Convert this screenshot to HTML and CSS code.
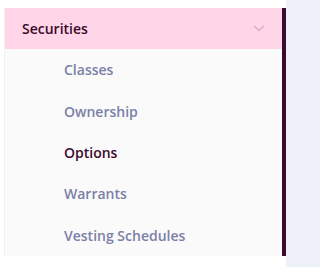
FILE: index.html
```html
<!DOCTYPE html>
<html>
<head>
<meta charset="utf-8">
<link rel="stylesheet" href="styles.css">
</head>
<body>
<div class="layout">
  <nav class="menu">
    <div class="group-head">
      <span class="group-title">Securities</span>
      <svg class="chevron" width="12" height="7" viewBox="0 0 12 7"><path d="M1 1 L6 5.5 L11 1" fill="none" stroke="#d9aec6" stroke-width="1.6"/></svg>
    </div>
    <ul class="items">
      <li class="item">Classes</li>
      <li class="item">Ownership</li>
      <li class="item active">Options</li>
      <li class="item">Warrants</li>
      <li class="item">Vesting Schedules</li>
    </ul>
  </nav>
  <div class="content"></div>
</div>
</body>
</html>
```
FILE: styles.css
```css
html, body {
  margin: 0;
  padding: 0;
  background: #ffffff;
  font-family: "Open Sans", "Liberation Sans", sans-serif;
}
.layout {
  display: flex;
  height: 267px;
  padding-left: 4px;
  box-sizing: border-box;
}
.menu {
  width: 277px;
  margin-top: 8px;
  height: 248px;
  background: #fafafa;
  border-right: 4px solid #3b0a2d;
  border-left: 1px solid #f0f0f0;
  box-sizing: content-box;
  display: flex;
  flex-direction: column;
}
.group-head {
  height: 41px;
  background: #ffd6e7;
  display: flex;
  align-items: center;
  justify-content: space-between;
  padding: 0 17px 0 17px;
}
.group-title {
  font-size: 14px;
  font-weight: 600;
  color: #3b0a2d;
}
.chevron {
  display: block;
}
.items {
  list-style: none;
  margin: 0;
  padding: 0;
}
.item {
  height: 41.4px;
  display: flex;
  align-items: center;
  padding-left: 59px;
  font-size: 14px;
  font-weight: 600;
  color: #7b80a8;
}
.item.active {
  color: #3b0a2d;
}
.content {
  flex: 1;
  background: #eef1f9;
}
```
